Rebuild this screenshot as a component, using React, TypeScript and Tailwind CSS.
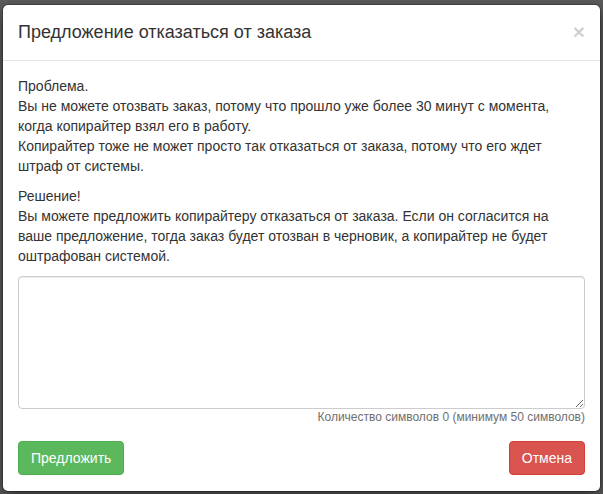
import { useState } from "react";

export default function App() {
  const [text, setText] = useState("");

  return (
    <div
      className="w-[603px] h-[494px] bg-[#5d5d5d] pt-[5px] pl-[2px] overflow-hidden text-[#333]"
      style={{ fontFamily: '"Liberation Sans", Arial, sans-serif' }}
    >
      <div className="w-[599px] bg-white rounded-[6px] border border-black/20 shadow-[0_5px_15px_rgba(0,0,0,0.5)] bg-clip-padding -mt-px">
        <div className="flex items-start justify-between px-[15px] py-[15px] border-b border-[#e5e5e5]">
          <h4 className="text-[18px] leading-[25px] font-normal">
            Предложение отказаться от заказа
          </h4>
          <button className="text-[21px] leading-[21px] font-bold text-black/20 mt-[1px]">
            ×
          </button>
        </div>
        <div className="px-[15px] pt-[15px] pb-[16px] text-[14px] leading-[20px]">
          <p className="mb-[10px]">
            Проблема.
            <br />
            Вы не можете отозвать заказ, потому что прошло уже более 30 минут с
            момента, когда копирайтер взял его в работу.
            <br />
            Копирайтер тоже не может просто так отказаться от заказа, потому что
            его ждет штраф от системы.
          </p>
          <p className="mb-[10px]">
            Решение!
            <br />
            Вы можете предложить копирайтеру отказаться от заказа. Если он
            согласится на ваше предложение, тогда заказ будет отозван в
            черновик, а копирайтер не будет оштрафован системой.
          </p>
          <textarea
            value={text}
            onChange={(e) => setText(e.currentTarget.value)}
            className="block w-full h-[133px] border border-[#ccc] rounded-[4px] shadow-[inset_0_1px_1px_rgba(0,0,0,0.075)] px-3 py-1.5 outline-none"
          />
          <div className="text-right text-[12px] leading-[17px] text-[#6f6f6f]">
            Количество символов {text.length} (минимум 50 символов)
          </div>
          <div className="flex justify-between mt-[15px]">
            <button className="h-[34px] px-[12px] rounded-[4px] border border-[#4cae4c] bg-[#5cb85c] text-white text-[14px]">
              Предложить
            </button>
            <button className="h-[34px] px-[12px] rounded-[4px] border border-[#d43f3a] bg-[#d9534f] text-white text-[14px]">
              Отмена
            </button>
          </div>
        </div>
      </div>
    </div>
  );
}
